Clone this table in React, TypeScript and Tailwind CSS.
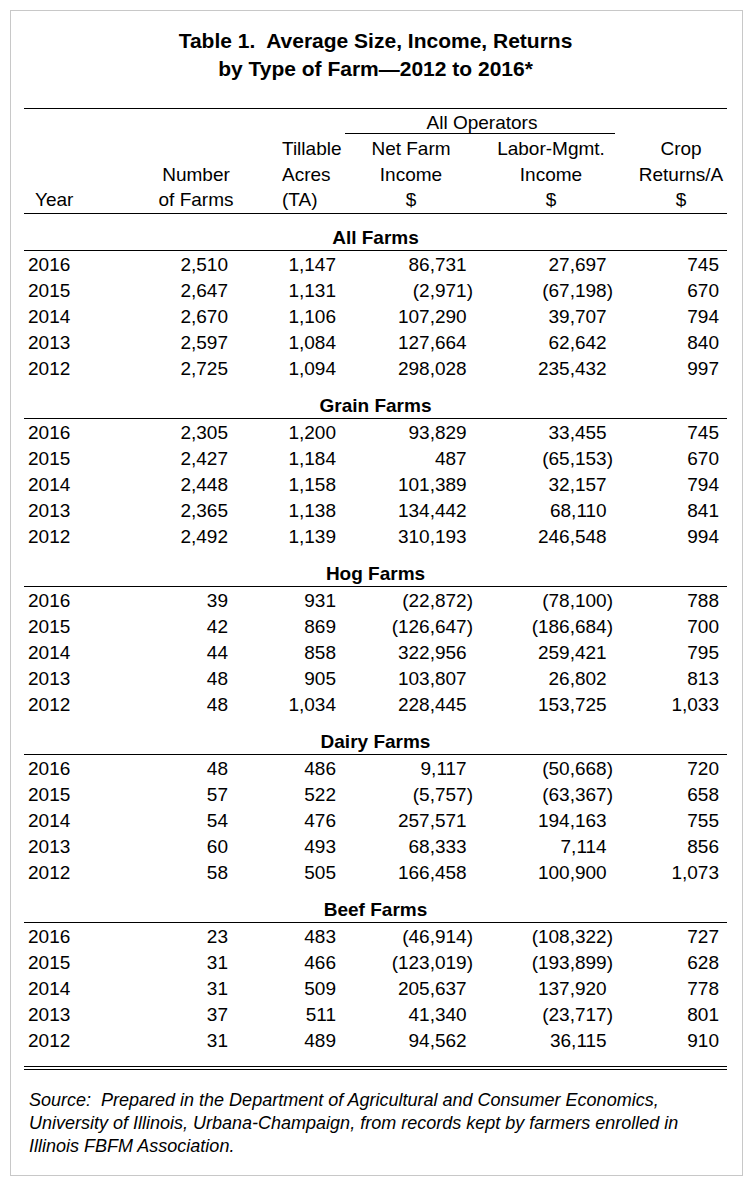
import React from "react";

type Row = [string, string, string, string, string, string];

const sections: { title: string; rows: Row[] }[] = [
  {
    title: "All Farms",
    rows: [
      ["2016", "2,510", "1,147", "86,731", "27,697", "745"],
      ["2015", "2,647", "1,131", "(2,971)", "(67,198)", "670"],
      ["2014", "2,670", "1,106", "107,290", "39,707", "794"],
      ["2013", "2,597", "1,084", "127,664", "62,642", "840"],
      ["2012", "2,725", "1,094", "298,028", "235,432", "997"],
    ],
  },
  {
    title: "Grain Farms",
    rows: [
      ["2016", "2,305", "1,200", "93,829", "33,455", "745"],
      ["2015", "2,427", "1,184", "487", "(65,153)", "670"],
      ["2014", "2,448", "1,158", "101,389", "32,157", "794"],
      ["2013", "2,365", "1,138", "134,442", "68,110", "841"],
      ["2012", "2,492", "1,139", "310,193", "246,548", "994"],
    ],
  },
  {
    title: "Hog Farms",
    rows: [
      ["2016", "39", "931", "(22,872)", "(78,100)", "788"],
      ["2015", "42", "869", "(126,647)", "(186,684)", "700"],
      ["2014", "44", "858", "322,956", "259,421", "795"],
      ["2013", "48", "905", "103,807", "26,802", "813"],
      ["2012", "48", "1,034", "228,445", "153,725", "1,033"],
    ],
  },
  {
    title: "Dairy Farms",
    rows: [
      ["2016", "48", "486", "9,117", "(50,668)", "720"],
      ["2015", "57", "522", "(5,757)", "(63,367)", "658"],
      ["2014", "54", "476", "257,571", "194,163", "755"],
      ["2013", "60", "493", "68,333", "7,114", "856"],
      ["2012", "58", "505", "166,458", "100,900", "1,073"],
    ],
  },
  {
    title: "Beef Farms",
    rows: [
      ["2016", "23", "483", "(46,914)", "(108,322)", "727"],
      ["2015", "31", "466", "(123,019)", "(193,899)", "628"],
      ["2014", "31", "509", "205,637", "137,920", "778"],
      ["2013", "37", "511", "41,340", "(23,717)", "801"],
      ["2012", "31", "489", "94,562", "36,115", "910"],
    ],
  },
];

const grid = "grid grid-cols-[116px_112px_93px_132px_148px_102px]";

// accounting style: positives keep room for the closing paren
const Money = ({ v }: { v: string }) =>
  v.startsWith("(") ? (
    <>{v}</>
  ) : (
    <>
      {v}
      <span className="invisible">)</span>
    </>
  );

export default function App() {
  return (
    <div
      className="mx-[10px] mt-[10px] w-[733px] border border-[#c8c8c8] bg-white pl-[13px] pr-[15px] pt-[16px] pb-[17px] text-black"
      style={{ fontFamily: '"Liberation Sans", Arial, sans-serif' }}
    >
      <h1 className="text-center text-[21px] font-bold leading-[28px] whitespace-pre">
        {"Table 1.  Average Size, Income, Returns\nby Type of Farm\u20142012 to 2016*"}
      </h1>

      <div className="mt-[25px] border-t border-black text-[19px]">
        <div className={grid}>
          <div className="col-start-4 col-span-2">
            <div className="w-[270px] border-b border-black pt-[4px] pl-[4px] text-center leading-[20px]">
              All Operators
            </div>
          </div>
        </div>
        <div className={`${grid} mt-[2px] border-b border-black leading-[25.5px]`}>
          <div className="flex h-[76.5px] flex-col justify-end pl-[11px]">Year</div>
          <div className="flex flex-col justify-end text-center">
            <span>Number</span>
            <span>of Farms</span>
          </div>
          <div className="flex flex-col justify-end pl-[30px]">
            <span>Tillable</span>
            <span>Acres</span>
            <span>(TA)</span>
          </div>
          <div className="flex flex-col justify-end text-center">
            <span>Net Farm</span>
            <span>Income</span>
            <span>$</span>
          </div>
          <div className="flex flex-col justify-end text-center">
            <span>Labor-Mgmt.</span>
            <span>Income</span>
            <span>$</span>
          </div>
          <div className="flex flex-col justify-end pl-[10px] text-center">
            <span>Crop</span>
            <span>Returns/A</span>
            <span>$</span>
          </div>
        </div>

        {sections.map((s) => (
          <div key={s.title}>
            <div className="pt-[12px]">
              <div className="border-b border-black text-center font-bold leading-[24px]">{s.title}</div>
            </div>
            <div className="pt-[1px]">
              {s.rows.map((r) => (
                <div key={r[0]} className={`${grid} leading-[26px]`}>
                  <div className="pl-[4px]">{r[0]}</div>
                  <div className="pr-[24px] text-right">{r[1]}</div>
                  <div className="pr-[9px] text-right">{r[2]}</div>
                  <div className="pr-[4px] text-right">
                    <Money v={r[3]} />
                  </div>
                  <div className="pr-[12px] text-right">
                    <Money v={r[4]} />
                  </div>
                  <div className="pr-[8px] text-right">{r[5]}</div>
                </div>
              ))}
            </div>
          </div>
        ))}

        <div className="mt-[12px] h-px bg-black" />
        <div className="mt-[2px] h-px bg-black" />
      </div>

      <p className="mt-[19px] pl-[5px] text-[18px] italic leading-[23px] whitespace-pre">
        {
          "Source:  Prepared in the Department of Agricultural and Consumer Economics,\nUniversity of Illinois, Urbana-Champaign, from records kept by farmers enrolled in\nIllinois FBFM Association."
        }
      </p>
    </div>
  );
}
